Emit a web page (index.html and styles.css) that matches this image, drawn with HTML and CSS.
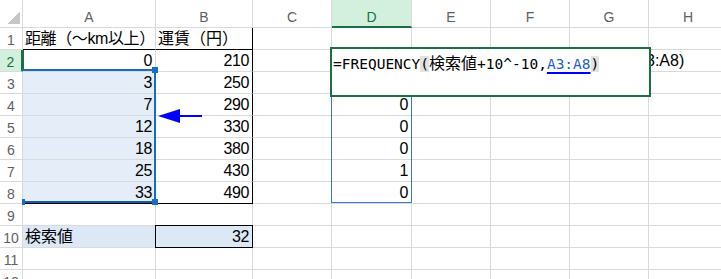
FILE: index.html
```html
<!DOCTYPE html>
<html lang="ja">
<head>
  <meta charset="utf-8">
  <link rel="stylesheet" href="styles.css">
</head>
<body>
  <div class="sheet">
    <div class="row head">
      <div class="corner"></div>
      <div class="col">A</div>
      <div class="col">B</div>
      <div class="col">C</div>
      <div class="col active">D</div>
      <div class="col">E</div>
      <div class="col">F</div>
      <div class="col">G</div>
      <div class="col">H</div>
    </div>
    <div class="row">
      <div class="num">1</div>
      <div class="cell line-b tight">距離（～km以上）</div>
      <div class="cell line-b line-r">運賃（円）</div>
      <div class="cell"></div><div class="cell"></div><div class="cell"></div><div class="cell"></div><div class="cell"></div><div class="cell"></div>
    </div>
    <div class="row">
      <div class="num active">2</div>
      <div class="cell n">0</div>
      <div class="cell n line-r">210</div>
      <div class="cell"></div>
      <div class="cell spill"><span>=FREQUENCY(検索値+10^-10,A3:A8)</span></div>
      <div class="cell"></div><div class="cell"></div><div class="cell"></div><div class="cell"></div>
    </div>
    <div class="row">
      <div class="num">3</div>
      <div class="cell n sel">3</div>
      <div class="cell n line-r">250</div>
      <div class="cell"></div><div class="cell"></div><div class="cell"></div><div class="cell"></div><div class="cell"></div><div class="cell"></div>
    </div>
    <div class="row">
      <div class="num">4</div>
      <div class="cell n sel">7</div>
      <div class="cell n line-r">290</div>
      <div class="cell"></div>
      <div class="cell n">0</div>
      <div class="cell"></div><div class="cell"></div><div class="cell"></div><div class="cell"></div>
    </div>
    <div class="row">
      <div class="num">5</div>
      <div class="cell n sel">12</div>
      <div class="cell n line-r">330</div>
      <div class="cell"></div>
      <div class="cell n">0</div>
      <div class="cell"></div><div class="cell"></div><div class="cell"></div><div class="cell"></div>
    </div>
    <div class="row">
      <div class="num">6</div>
      <div class="cell n sel">18</div>
      <div class="cell n line-r">380</div>
      <div class="cell"></div>
      <div class="cell n">0</div>
      <div class="cell"></div><div class="cell"></div><div class="cell"></div><div class="cell"></div>
    </div>
    <div class="row">
      <div class="num">7</div>
      <div class="cell n sel">25</div>
      <div class="cell n line-r">430</div>
      <div class="cell"></div>
      <div class="cell n">1</div>
      <div class="cell"></div><div class="cell"></div><div class="cell"></div><div class="cell"></div>
    </div>
    <div class="row">
      <div class="num">8</div>
      <div class="cell n sel line-b">33</div>
      <div class="cell n line-r line-b">490</div>
      <div class="cell"></div>
      <div class="cell n">0</div>
      <div class="cell"></div><div class="cell"></div><div class="cell"></div><div class="cell"></div>
    </div>
    <div class="row">
      <div class="num">9</div>
      <div class="cell"></div><div class="cell"></div><div class="cell"></div><div class="cell"></div><div class="cell"></div><div class="cell"></div><div class="cell"></div><div class="cell"></div>
    </div>
    <div class="row">
      <div class="num">10</div>
      <div class="cell key">検索値</div>
      <div class="cell n key boxed">32</div>
      <div class="cell"></div><div class="cell"></div><div class="cell"></div><div class="cell"></div><div class="cell"></div><div class="cell"></div>
    </div>
    <div class="row">
      <div class="num">11</div>
      <div class="cell"></div><div class="cell"></div><div class="cell"></div><div class="cell"></div><div class="cell"></div><div class="cell"></div><div class="cell"></div><div class="cell"></div>
    </div>
    <div class="row">
      <div class="num">12</div>
      <div class="cell"></div><div class="cell"></div><div class="cell"></div><div class="cell"></div><div class="cell"></div><div class="cell"></div><div class="cell"></div><div class="cell"></div>
    </div>

    <!-- overlays: selection, referenced range, arrow, in-cell editor -->
    <div class="selection">
      <span class="handle h-tr"></span>
      <span class="handle h-bl"></span>
      <span class="handle h-br"></span>
    </div>
    <div class="ref-range"></div>
    <svg class="arrow" width="50" height="20" viewBox="0 0 50 20">
      <polygon points="2,10 24,3 24,17" fill="#0000ff"/>
      <line x1="23" y1="10" x2="46" y2="10" stroke="#0000ff" stroke-width="2"/>
    </svg>
    <div class="editor">=FREQUENCY<span class="paren">(</span><span class="kanji">検索値</span>+10^-10,<span class="ref">A3:A8</span><span class="paren">)</span></div>
  </div>
</body>
</html>
```

FILE: styles.css
```css
html, body {
  margin: 0;
  padding: 0;
}
body {
  --grid: #dadada;
  --green: #1b7043;
  --green-bg: #d3efdd;
  --blue: #1a6cc0;
  background: #fff;
  color: #000;
  font-family: "Liberation Sans", "Noto Sans CJK JP", sans-serif;
  overflow: hidden;
}

.sheet {
  position: relative;
  width: 721px;
  height: 279px;
  overflow: hidden;
}
.row {
  display: grid;
  grid-template-columns: 23px 133px 97px 79px 80px 79px 79px 79px 79px;
  height: 22px;
}
.row > div {
  box-sizing: border-box;
  border-right: 1px solid var(--grid);
  border-bottom: 1px solid var(--grid);
  white-space: nowrap;
  overflow: hidden;
}
.row.head {
  height: 28px;
}

/* headers */
.corner {
  background: linear-gradient(to bottom right, transparent 50%, #c6c6c6 50%) no-repeat right 2px bottom 3px / 13px 12px;
}
.col {
  text-align: center;
  color: #616161;
  font-size: 14px;
  line-height: 20px;
  padding-top: 7px;
}
.col.active {
  background: var(--green-bg);
  color: var(--green);
  border-bottom: 2px solid var(--green) !important;
}
.num {
  text-align: center;
  color: #616161;
  font-size: 14px;
  line-height: 22px;
  padding-top: 1px;
}
.num.active {
  background: var(--green-bg);
  color: var(--green);
  border-right: 3px solid var(--green) !important;
  margin-right: -1px;
}

/* cells */
.cell {
  font-size: 16px;
  line-height: 21px;
  padding: 0 2px 0 2px;
}
.cell.tight {
  letter-spacing: -0.4px;
}
.cell.n {
  text-align: right;
  letter-spacing: -0.4px;
  padding-right: 3px;
}
.cell.sel {
  background: #e5eef8;
}
.cell.key {
  background: #dce8f6;
}
.cell.line-b {
  border-bottom-color: #000;
}
.cell.line-r {
  border-right-color: #000;
}
.cell.boxed {
  position: relative;
  overflow: visible;
}
.cell.boxed::after {
  content: "";
  position: absolute;
  top: -1px;
  left: -1px;
  right: -1px;
  bottom: -1px;
  border: 1px solid #000;
}
.cell.spill {
  overflow: visible;
}
.cell.spill span {
  padding-left: 76px;
}

/* overlays */
.selection {
  position: absolute;
  left: 22px;
  top: 69px;
  width: 132px;
  height: 130px;
  border-top: 2px solid var(--blue);
  border-right: 2px solid var(--blue);
  border-bottom: 2px solid #0f5ba8;
}
.handle {
  position: absolute;
  width: 6px;
  height: 6px;
  background: var(--blue);
}
.h-tr {
  right: -4px;
  top: -4px;
}
.h-bl {
  left: 0;
  bottom: -4px;
  width: 3px;
}
.h-br {
  right: -4px;
  bottom: -4px;
}
.ref-range {
  position: absolute;
  left: 331px;
  top: 92px;
  width: 79px;
  height: 109px;
  border: 1px solid #3a78d6;
}
.arrow {
  position: absolute;
  left: 156px;
  top: 106px;
}
.editor {
  position: absolute;
  left: 330px;
  top: 47px;
  width: 316px;
  height: 41px;
  padding: 5px 0 0 1px;
  box-sizing: content-box;
  border: 2px solid var(--green);
  background: #fff;
  font-family: "DejaVu Sans Mono", "Noto Sans CJK JP", monospace;
  font-size: 14.5px;
  line-height: 20px;
  white-space: nowrap;
}
.editor .kanji {
  font-size: 16px;
}
.editor .paren {
  background: #e2e2e2;
}
.editor .ref {
  color: #1f5fc8;
  text-decoration: underline 2px #0000ff;
  text-underline-offset: 3px;
}
```
